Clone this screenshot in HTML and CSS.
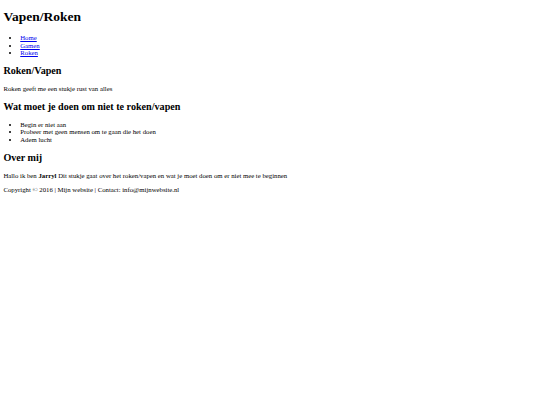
FILE: index.html
```html
<!DOCTYPE html>
<html lang="nl">
<head>
<meta charset="utf-8">
<title>Vapen/Roken</title>
<link rel="stylesheet" href="styles.css">
</head>
<body>
<header>
  <h1 class="title">Vapen/Roken</h1>
  <nav>
    <ul class="list">
      <li><a href="#">Home</a></li>
      <li><a href="#">Gamen</a></li>
      <li><a href="#">Roken</a></li>
    </ul>
  </nav>
</header>
<main>
  <section>
    <h2 class="heading">Roken/Vapen</h2>
    <p class="text">Roken geeft me een stukje rust van alles</p>
  </section>
  <section>
    <h2 class="heading">Wat moet je doen om niet te roken/vapen</h2>
    <ul class="list">
      <li>Begin er niet aan</li>
      <li>Probeer met geen mensen om te gaan die het doen</li>
      <li>Adem lucht</li>
    </ul>
  </section>
  <section>
    <h2 class="heading">Over mij</h2>
    <p class="text">Hallo ik ben <strong>Jarryl</strong> Dit stukje gaat over het roken/vapen en wat je moet doen om er niet mee te beginnen</p>
  </section>
</main>
<footer>
  <p class="text">Copyright © 2016 | Mijn website | Contact: info@mijnwebsite.nl</p>
</footer>
</body>
</html>
```
FILE: styles.css
```css
html {
  background: #ffffff;
}
body {
  margin: 0 3.375px 3.375px;
  font-family: "Liberation Serif", "Times New Roman", serif;
  font-size: 6.75px;
  line-height: 7.5px;
  color: #000000;
}
.title {
  font-size: 13.5px;
  line-height: 15.52px;
  font-weight: bold;
  margin: 9.045px 0 9.6px;
}
.heading {
  font-size: 10.125px;
  line-height: 11.64px;
  font-weight: bold;
  margin: 8.4px 0;
}
.text {
  margin: 6.75px 0;
}
.list {
  margin: 6.75px 0;
  padding-left: 16.875px;
  list-style: disc;
}
a {
  color: #0000ee;
  text-decoration: underline;
}
```
